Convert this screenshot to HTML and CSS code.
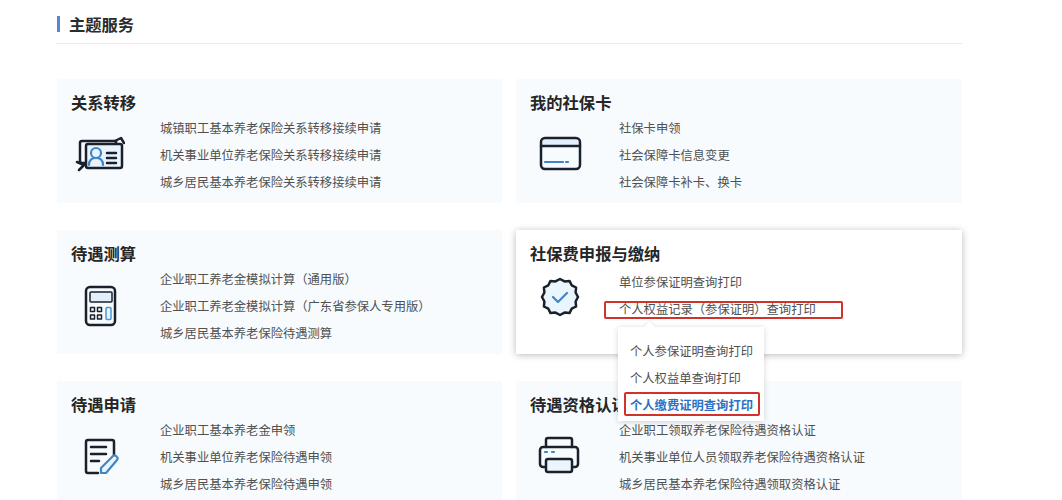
FILE: index.html
```html
<!DOCTYPE html>
<html lang="zh-CN">
<head>
<meta charset="utf-8">
<title>主题服务</title>
<link rel="stylesheet" href="styles.css">
</head>
<body>
<main class="page">
  <header class="section-head"><h2 class="section-title">主题服务</h2></header>
  <section class="grid">
    <article class="card">
      <h3 class="card-title">关系转移</h3>
      <div class="card-body">
        <svg class="icon" viewBox="0 0 50 60" aria-hidden="true">
          <path class="ln" d="M11 42H7a2 2 0 0 1-2-2V22a2 2 0 0 1 2-2h34v3"/>
          <rect class="tint" x="11" y="23" width="36" height="24" rx="2"/>
          <path class="ln" d="M40 20l6-3 3 5M2 41l7 3-5 5"/>
          <circle class="bl" cx="21" cy="32" r="5"/>
          <path class="bl" d="M14 44c0-5 3-7 7-7s7 2 7 7"/>
          <path class="ln" d="M32 32h9M32 37h9M32 42h9"/>
        </svg>
        <ul class="links">
          <li>城镇职工基本养老保险关系转移接续申请</li>
          <li>机关事业单位养老保险关系转移接续申请</li>
          <li>城乡居民基本养老保险关系转移接续申请</li>
        </ul>
      </div>
    </article>
    <article class="card">
      <h3 class="card-title">我的社保卡</h3>
      <div class="card-body">
        <svg class="icon" viewBox="0 0 50 60" aria-hidden="true">
          <path class="band" d="M7 17h39v8H7z"/>
          <rect class="ln" x="7" y="17" width="39" height="31" rx="4"/>
          <path class="ln" d="M7 25h39"/>
          <path class="bl" d="M11 41h18M32 41h2"/>
        </svg>
        <ul class="links">
          <li>社保卡申领</li>
          <li>社会保障卡信息变更</li>
          <li>社会保障卡补卡、换卡</li>
        </ul>
      </div>
    </article>
    <article class="card">
      <h3 class="card-title">待遇测算</h3>
      <div class="card-body">
        <svg class="icon" viewBox="0 0 50 60" aria-hidden="true">
          <rect class="ln" x="11" y="15" width="29" height="38" rx="4"/>
          <rect class="thin tint-only" x="15" y="20" width="22" height="10" rx="1"/>
          <path class="thin" d="M15.500 35.500h4v4h-4zM22.500 35.500h4v4h-4zM15.500 43h4v4h-4zM22.500 43h4v4h-4z"/>
          <rect class="bl-thin" x="31" y="35.500" width="5" height="12" rx="1"/>
        </svg>
        <ul class="links">
          <li>企业职工养老金模拟计算（通用版）</li>
          <li>企业职工养老金模拟计算（广东省参保人专用版）</li>
          <li>城乡居民基本养老保险待遇测算</li>
        </ul>
      </div>
    </article>
    <article class="card card-active">
      <h3 class="card-title">社保费申报与缴纳</h3>
      <div class="card-body">
        <svg class="icon" viewBox="0 0 50 60" aria-hidden="true">
          <polygon class="ln tint-fill" points="26,7 30.500,9.400 35.500,8.900 37.700,13.300 42.100,15.500 41.600,20.500 44,25 41.600,29.500 42.100,34.500 37.700,36.700 35.500,41.100 30.500,40.600 26,43 21.500,40.600 16.500,41.100 14.300,36.700 9.900,34.500 10.400,29.500 8,25 10.400,20.500 9.900,15.500 14.300,13.300 16.500,8.900 21.500,9.400"/>
          <path class="bl" d="M19 25l5 5 9-9"/>
        </svg>
        <ul class="links links-active">
          <li>单位参保证明查询打印</li>
          <li>个人权益记录（参保证明）查询打印</li>
        </ul>
      </div>
      <span class="mark mark-link"></span>
      <div class="popover">
        <span class="popover-arrow"></span>
        <ul class="popover-list">
          <li>个人参保证明查询打印</li>
          <li>个人权益单查询打印</li>
          <li class="selected">个人缴费证明查询打印</li>
        </ul>
        <span class="mark mark-item"></span>
      </div>
    </article>
    <article class="card">
      <h3 class="card-title">待遇申请</h3>
      <div class="card-body">
        <svg class="icon" viewBox="0 0 50 60" aria-hidden="true">
          <path class="ln" d="M23 50H13a2 2 0 0 1-2-2V19a2 2 0 0 1 2-2h24a2 2 0 0 1 2 2v14"/>
          <path class="ln" d="M16 24h15M16 31h15M16 38h8"/>
          <path class="bl tint-fill" d="M26 50v-5l12-12a2 2 0 0 1 3 0l1 1a2 2 0 0 1 0 3L31 50z"/>
        </svg>
        <ul class="links">
          <li>企业职工基本养老金申领</li>
          <li>机关事业单位养老保险待遇申领</li>
          <li>城乡居民基本养老保险待遇申领</li>
        </ul>
      </div>
    </article>
    <article class="card">
      <h3 class="card-title">待遇资格认证</h3>
      <div class="card-body">
        <svg class="icon" viewBox="0 0 50 60" aria-hidden="true">
          <path class="ln" d="M12 24v-7a2 2 0 0 1 2-2h22a2 2 0 0 1 2 2v7"/>
          <path class="ln" d="M12 44H9a3 3 0 0 1-3-3V27a3 3 0 0 1 3-3h32a3 3 0 0 1 3 3v14a3 3 0 0 1-3 3h-3"/>
          <rect class="ln tint-fill" x="12" y="36" width="26" height="13" rx="2"/>
          <path class="bl" d="M11 29h2M18 29h2"/>
        </svg>
        <ul class="links">
          <li>企业职工领取养老保险待遇资格认证</li>
          <li>机关事业单位人员领取养老保险待遇资格认证</li>
          <li>城乡居民基本养老保险待遇领取资格认证</li>
        </ul>
      </div>
    </article>
  </section>
</main>
</body>
</html>
```
FILE: styles.css
```css
* { box-sizing: border-box; }
html, body { margin: 0; height: 500px; overflow: hidden; background: #fff; }
body { font-family: "Noto Sans CJK SC", "Noto Sans", sans-serif; color: #222; }
ul { list-style: none; margin: 0; padding: 0; }
h2, h3 { margin: 0; }

.page { width: 906px; margin-left: 56px; }

.section-head { height: 44px; padding-top: 16px; border-bottom: 1px solid #e8e9eb; }
.section-title {
  height: 16px;
  margin-left: 1px;
  padding-left: 9px;
  border-left: 3px solid #5b86cf;
  font-size: 16.300px;
  font-weight: 700;
  line-height: 17px;
  color: #2b2b2b;
}

.grid {
  display: grid;
  grid-template-columns: 445px 446px;
  grid-auto-rows: 124px;
  column-gap: 14px;
  row-gap: 27px;
  padding: 35px 0 0 1px;
}

.card { position: relative; padding: 14px 0 0 14px; background: #f7fbfe; }
.card-active { background: #fff; box-shadow: 0 1px 7px rgba(0, 0, 0, .28); }
.card-title { height: 20px; font-size: 16.300px; font-weight: 700; line-height: 19px; color: #262626; }
.card-body { display: flex; }

.icon { flex: none; width: 50px; height: 60px; margin: 8px 35px 0 4px; }
.ln, .thin, .bl, .bl-thin { fill: none; stroke-linecap: round; stroke-linejoin: round; }
.ln { stroke: #1a212c; stroke-width: 2.500; }
.thin { stroke: #1a212c; stroke-width: 1.500; }
.bl { stroke: #3f86c6; stroke-width: 2.200; }
.bl-thin { stroke: #4a96d6; stroke-width: 1.500; fill: #e6f3fd; }
.tint { fill: #e9f4fc; stroke: #1a212c; stroke-width: 2.500; }
.band, .tint-only { fill: #e2f0fc; }
.ln.tint-fill, .bl.tint-fill { fill: #eaf5fd; }

.links { margin-top: 1.500px; font-size: 12.300px; line-height: 27.300px; color: #505050; white-space: nowrap; }
.links-active { margin-top: 5px; }

.mark { position: absolute; border: 2px solid #d3322b; border-radius: 2px; }
.mark-link { left: 88px; top: 71px; width: 239px; height: 18px; }
.mark-item { left: 6px; top: 65px; width: 136px; height: 24px; }

.popover {
  position: absolute;
  z-index: 2;
  left: 102px;
  top: 97px;
  width: 146px;
  height: 94px;
  padding: 11px 0 0 12px;
  background: #fff;
  box-shadow: 0 1px 6px rgba(0, 0, 0, .16);
}
.popover-arrow {
  position: absolute;
  left: 27px;
  top: -4px;
  width: 9px;
  height: 9px;
  background: #fff;
  transform: rotate(45deg);
  box-shadow: -1px -1px 2px rgba(0, 0, 0, .06);
}
.popover-list { position: relative; font-size: 12.300px; line-height: 27px; color: #505050; white-space: nowrap; }
.popover-list .selected { font-weight: 700; color: #2f70c3; }
```
